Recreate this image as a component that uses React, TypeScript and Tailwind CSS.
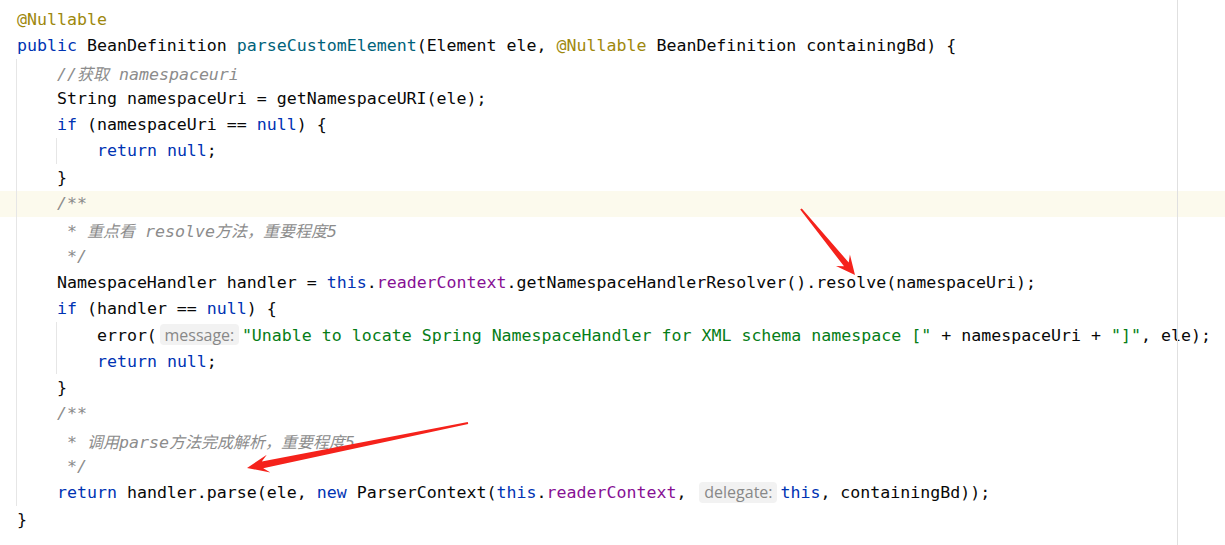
import React from "react";

const KW = "text-[#0033b3]";
const ANN = "text-[#9e880d]";
const FN = "text-[#00627a]";
const STR = "text-[#067d17]";
const FLD = "text-[#871094]";
const CMT = "text-[#8c8c8c] italic";

const Hint: React.FC<{ label: string; w: string }> = ({ label, w }) => (
  <span
    className={`inline-flex h-[21px] ${w} items-center justify-center rounded-[4px] bg-[#f2f2f2] align-middle text-[16px] not-italic leading-none text-[#888888] font-['Open_Sans',sans-serif] mx-[3px] -mt-[3px]`}
  >
    {label}
  </span>
);

// split comment text so CJK runs get their own font
const Comment: React.FC<{ text: string }> = ({ text }) => {
  const parts = text.split(/([\u3000-\u9fff\uff00-\uffef]+)/);
  return (
    <span className={CMT}>
      {parts.map((p, i) =>
        /[\u3000-\u9fff\uff00-\uffef]/.test(p) ? (
          <span key={i} className="font-['Noto_Sans_CJK_SC',sans-serif] text-[16px]">
            {p}
          </span>
        ) : (
          <span key={i}>{p}</span>
        )
      )}
    </span>
  );
};

const Line: React.FC<{ children?: React.ReactNode; hl?: boolean }> = ({ children, hl }) => (
  <div className={`h-[26.3px] whitespace-pre pl-[17px] ${hl ? "bg-[#fcfaed]" : ""}`}>{children}</div>
);

const K = ({ children }: { children: React.ReactNode }) => <span className={KW}>{children}</span>;

function arrow(tx: number, ty: number, hx: number, hy: number, headLen: number, headHalf: number, neckHalf: number, tailHalf: number) {
  const L = Math.hypot(hx - tx, hy - ty);
  const ux = (hx - tx) / L;
  const uy = (hy - ty) / L;
  const nx = -uy;
  const ny = ux;
  const jx = hx - ux * headLen * 0.72;
  const jy = hy - uy * headLen * 0.72;
  const bx = hx - ux * headLen;
  const by = hy - uy * headLen;
  const pts = [
    [tx + nx * tailHalf, ty + ny * tailHalf],
    [jx + nx * neckHalf, jy + ny * neckHalf],
    [bx + nx * headHalf, by + ny * headHalf],
    [hx, hy],
    [bx - nx * headHalf, by - ny * headHalf],
    [jx - nx * neckHalf, jy - ny * neckHalf],
    [tx - nx * tailHalf, ty - ny * tailHalf],
  ];
  return pts.map((p) => p.map((v) => v.toFixed(1)).join(",")).join(" ");
}

export default function App() {
  return (
    <div className="relative h-[545px] w-[1225px] overflow-hidden bg-white pt-[7px] font-['DejaVu_Sans_Mono','Noto_Sans_CJK_SC',monospace] text-[16.6px] leading-[26.3px] text-[#080808]">
      <Line>
        <span className={ANN}>@Nullable</span>
      </Line>
      <Line>
        <K>public</K> BeanDefinition <span className={FN}>parseCustomElement</span>(Element ele,{" "}
        <span className={ANN}>@Nullable</span> BeanDefinition containingBd) {"{"}
      </Line>
      <Line>
        {"    "}
        <Comment text="//获取 namespaceuri" />
      </Line>
      <Line>{"    String namespaceUri = getNamespaceURI(ele);"}</Line>
      <Line>
        {"    "}
        <K>if</K> (namespaceUri == <K>null</K>) {"{"}
      </Line>
      <Line>
        {"        "}
        <K>return</K> <K>null</K>;
      </Line>
      <Line>{"    }"}</Line>
      <Line hl>
        {"    "}
        <Comment text="/**" />
      </Line>
      <Line>
        {"     "}
        <Comment text="* 重点看 resolve方法，重要程度5" />
      </Line>
      <Line>
        {"     "}
        <Comment text="*/" />
      </Line>
      <Line>
        {"    NamespaceHandler handler = "}
        <K>this</K>.<span className={FLD}>readerContext</span>.getNamespaceHandlerResolver().resolve(namespaceUri);
      </Line>
      <Line>
        {"    "}
        <K>if</K> (handler == <K>null</K>) {"{"}
      </Line>
      <Line>
        {"        error("}
        <Hint label="message:" w="w-[79px]" />
        <span className={STR}>"Unable to locate Spring NamespaceHandler for XML schema namespace ["</span>
        {" + namespaceUri + "}
        <span className={STR}>"]"</span>, ele);
      </Line>
      <Line>
        {"        "}
        <K>return</K> <K>null</K>;
      </Line>
      <Line>{"    }"}</Line>
      <Line>
        {"    "}
        <Comment text="/**" />
      </Line>
      <Line>
        {"     "}
        <Comment text="* 调用parse方法完成解析，重要程度5" />
      </Line>
      <Line>
        {"     "}
        <Comment text="*/" />
      </Line>
      <Line>
        {"    "}
        <K>return</K> handler.parse(ele, <K>new</K> ParserContext(<K>this</K>.<span className={FLD}>readerContext</span>,{" "}
        <Hint label="delegate:" w="w-[78px]" />
        <K>this</K>, containingBd));
      </Line>
      <Line>{"}"}</Line>

      {/* indent guides */}
      <div className="absolute left-[16px] top-[59px] h-[447px] w-px bg-[#e6e6e6]" />
      <div className="absolute left-[56px] top-[138px] h-[26px] w-px bg-[#e6e6e6]" />
      <div className="absolute left-[56px] top-[322px] h-[52px] w-px bg-[#e6e6e6]" />
      {/* right margin */}
      <div className="absolute left-[1177px] top-0 h-full w-px bg-[#e0e0e0]" />

      {/* annotation arrows */}
      <svg className="pointer-events-none absolute left-0 top-0" width="1225" height="545">
        <polygon points={arrow(801, 209, 855, 275, 19, 9, 3, 1)} fill="#f5221b" />
        <polygon points={arrow(468, 423, 247, 468, 22, 9, 3.5, 1)} fill="#f5221b" />
      </svg>
    </div>
  );
}
